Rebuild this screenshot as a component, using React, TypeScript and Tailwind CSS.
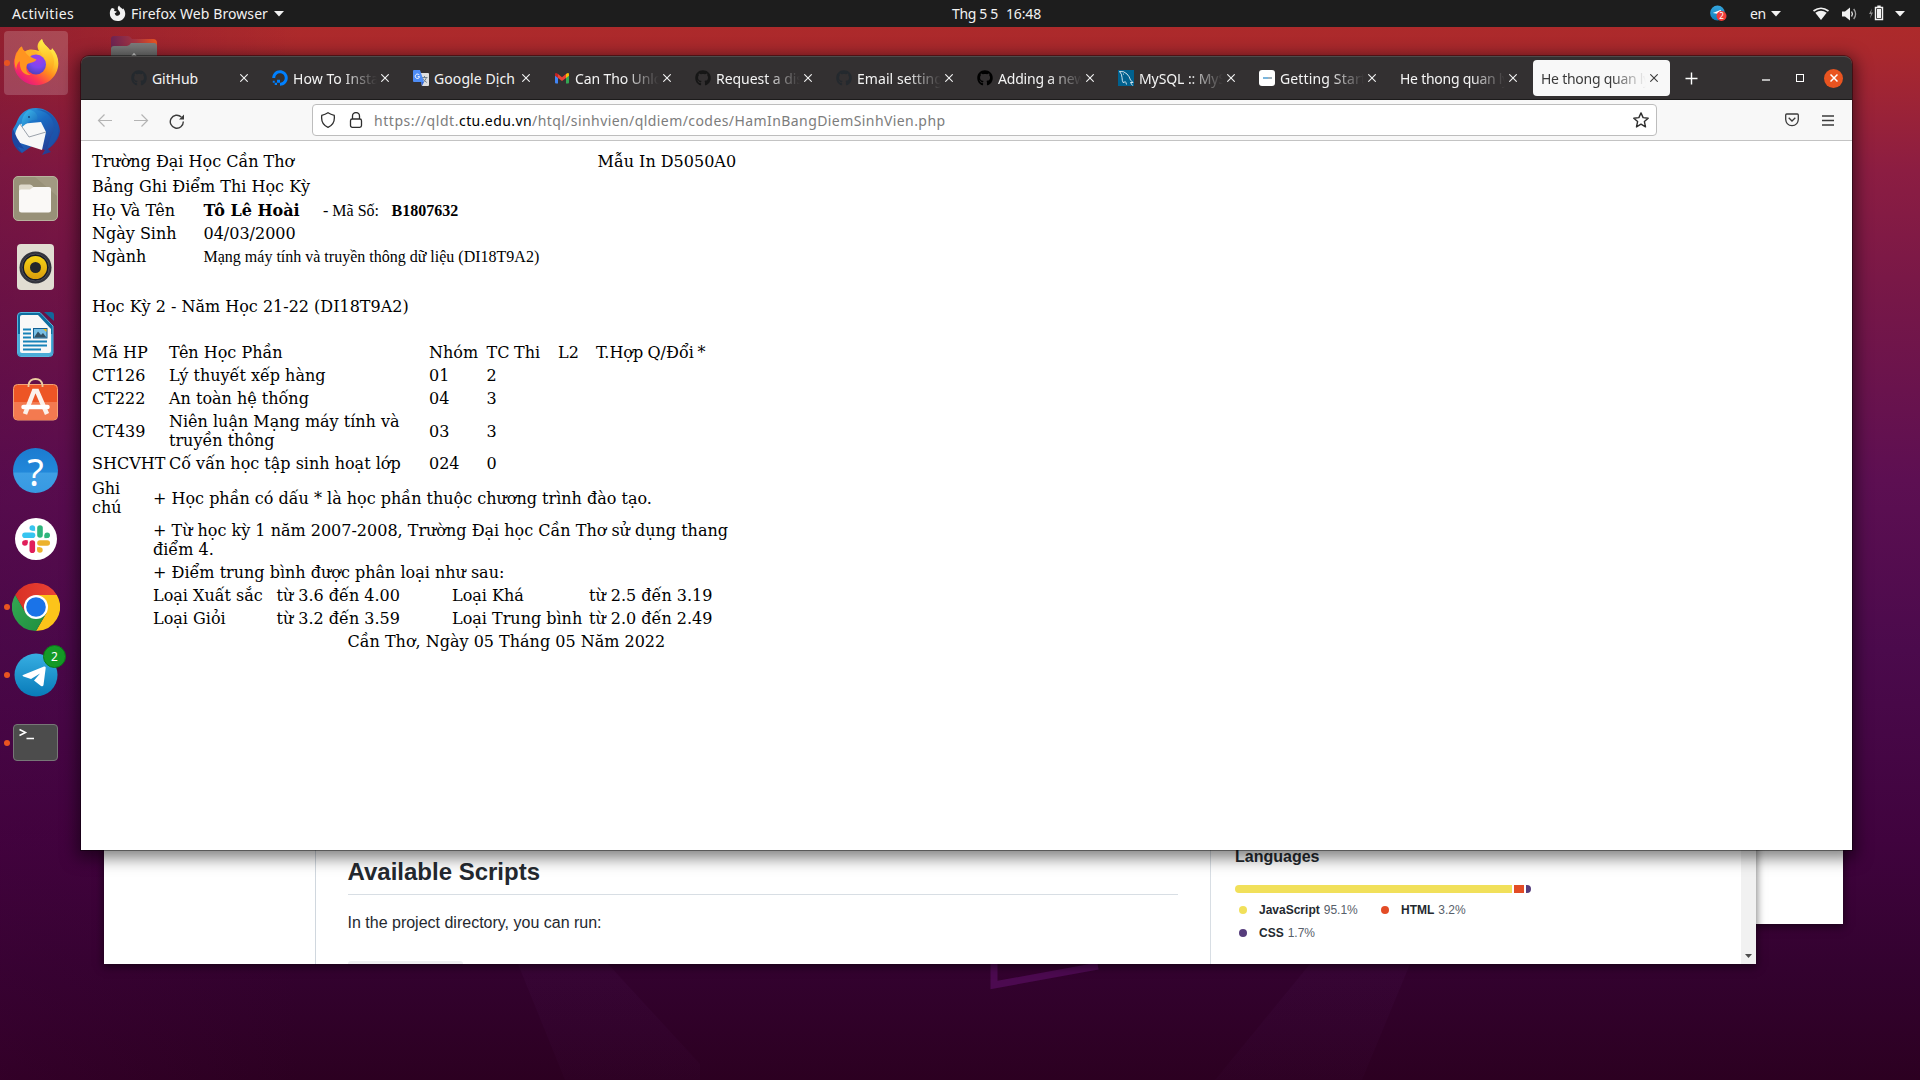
import { useLayoutEffect, useRef, useState, type ReactNode } from "react";
import { FaGithub, FaDigitalOcean } from "react-icons/fa";

/** Sets a label so that it fills exactly `w` pixels, by adjusting its tracking. */
function Fit({ w, children, className = "" }: { w: number; children: string; className?: string }) {
  const ref = useRef<HTMLSpanElement>(null);
  const [tracking, setTracking] = useState(0);
  useLayoutEffect(() => {
    const el = ref.current;
    if (!el) return;
    el.style.letterSpacing = "0px";
    const natural = el.getBoundingClientRect().width;
    const next = (w - natural) / children.length;
    el.style.letterSpacing = `${next}px`;
    setTracking(next);
  }, [w, children]);
  return (
    <span ref={ref} className={"inline-block shrink-0 whitespace-pre " + className} style={{ letterSpacing: `${tracking}px` }}>
      {children}
    </span>
  );
}

function Wallpaper() {
  return (
    <div className="absolute inset-0 bg-[linear-gradient(180deg,#b02b29_0px,#ab292c_45px,#8c1d42_170px,#761748_300px,#5d0f52_480px,#4b0a4c_650px,#40033e_840px,#33022f_970px,#2c0021_1080px)]">
      <div className="absolute inset-y-0 left-0 w-[300px] bg-[linear-gradient(90deg,rgba(70,0,60,0.25),transparent)]" />
      <svg className="absolute inset-0" width="1920" height="1080">
        <defs>
          <linearGradient id="beam" x1="0" y1="0" x2="0" y2="1"><stop stopColor="#45104a" stopOpacity=".22" /><stop offset="1" stopColor="#45104a" stopOpacity=".08" /></linearGradient>
        </defs>
        <path d="M518 964H608L700 1064V1080H565Z" fill="url(#beam)" />
        <path d="M1310 964H1410L1362 1080H1215Z" fill="url(#beam)" />
        <path d="M994 955V985L1098 966" fill="none" stroke="#4c0a50" strokeWidth="7" />
      </svg>
    </div>
  );
}

function Caret() {
  return (
    <svg width="10" height="6" viewBox="0 0 10 6">
      <path d="M0 0H10L5 5.5Z" fill="#f2f2f2" />
    </svg>
  );
}

function TopBar() {
  return (
    <header className="relative flex h-[27px] items-center bg-[#1d1d1d] pl-3 font-['Noto_Sans',sans-serif] text-[14px] leading-[27px] text-[#f2f2f2]">
      <Fit w={62}>Activities</Fit>
      <svg className="ml-[35px]" width="17" height="17" viewBox="0 0 17 17">
        <path d="M2.2 3.8C2.7 3 3.4 2.8 3.9 3.5C4.5 3.5 5.1 3.6 5.6 4C5.3 4.8 5 5.4 5.3 6L7.8 6.5C7.3 7.6 6.4 8 5.7 8.2C6 10 7.4 11 8.9 10.8C11 10.4 11.7 8.4 10.6 6.7C9.8 5.6 8.9 5 8.8 3.6C8.7 2.3 9.3 1.2 10.1 .4C10.8 2.2 12.5 2.6 13.6 4.2C14.1 4 14 3.4 13.8 3C17.4 6.6 16.8 12 13.5 14.5C9.8 17.3 4.2 16.3 1.9 12.5C.3 9.8 .6 6 2.2 3.8Z" fill="#f2f2f2" />
      </svg>
      <Fit w={137} className="ml-[5px]">Firefox Web Browser</Fit>
      <span className="ml-[6px]"><Caret /></span>
      <Fit w={46} className="ml-[668px]">Thg 5 5</Fit>
      <Fit w={35} className="ml-2">16:48</Fit>
      <svg className="ml-[669px]" width="17" height="17" viewBox="0 0 17 17">
        <defs>
          <linearGradient id="tray" x1="0" y1="0" x2="0" y2="1"><stop stopColor="#35a6de" /><stop offset="1" stopColor="#0c7dbb" /></linearGradient>
        </defs>
        <circle cx="7.5" cy="8" r="7.4" fill="url(#tray)" />
        <path d="M2.8 8L11 4.7L10 9.5L6 8.4Z" fill="#fff" />
        <circle cx="11.5" cy="11" r="5" fill="#ef3b38" />
        <text x="11.5" y="14" fontSize="8" fill="#fff" textAnchor="middle" fontFamily="Noto Sans">2</text>
      </svg>
      <Fit w={16} className="ml-[23px]">en</Fit>
      <span className="ml-[5px]"><Caret /></span>
      <svg className="ml-[32px]" width="16" height="14" viewBox="0 0 16 14">
        <path d="M.5 4Q8-1.5 15.5 4" fill="none" stroke="#f2f2f2" strokeWidth="1.7" />
        <path d="M2.3 5.8Q8 1.8 13.7 5.8L8 13Z" fill="#f2f2f2" />
      </svg>
      <svg className="ml-[12px]" width="17" height="14" viewBox="0 0 17 14">
        <path d="M1 4.5H4L9 .5V13.5L4 9.5H1Z" fill="#f2f2f2" />
        <path d="M10.6 4.5Q12.2 7 10.6 9.5" fill="none" stroke="#f2f2f2" strokeWidth="1.3" />
        <path d="M12.7 2Q16.5 7 12.7 12" fill="none" stroke="#a5a5a5" strokeWidth="1.3" />
      </svg>
      <svg className="-mt-[2px] ml-[9px]" width="18" height="16" viewBox="0 0 18 16">
        <path d="M5 3.5L2 9H4L3 13.5L6 7.5H4Z" fill="#8b8b8b" />
        <path d="M8.500 2.500H15.500V14.500H8.500Z" fill="none" stroke="#f2f2f2" strokeWidth="1.4" />
        <path d="M10 4H14V13H10ZM10.3 .5H13.7V2.4H10.3Z" fill="#f2f2f2" />
      </svg>
      <span className="ml-[10px]"><Caret /></span>
    </header>
  );
}

function FirefoxIcon() {
  return (
    <svg width="46" height="48" viewBox="0 0 46 48">
      <defs>
        <linearGradient id="ffBody" x1=".85" y1=".1" x2=".2" y2=".95">
          <stop stopColor="#fff44f" /><stop offset=".3" stopColor="#ffc42c" /><stop offset=".52" stopColor="#ff8a1e" /><stop offset=".76" stopColor="#ff3a50" /><stop offset="1" stopColor="#e01587" />
        </linearGradient>
        <linearGradient id="ffTail" x1=".5" y1="0" x2=".5" y2="1"><stop stopColor="#fff14a" /><stop offset=".6" stopColor="#ffbd28" /><stop offset="1" stopColor="#ff8b16" stopOpacity=".2" /></linearGradient>
        <radialGradient id="ffGlobe" cx=".6" cy=".25" r=".8"><stop stopColor="#a43ae8" /><stop offset=".5" stopColor="#7a48f0" /><stop offset="1" stopColor="#4a40b8" /></radialGradient>
      </defs>
      <path d="M5 12C6.500 9 8 8 9 7.500C9.200 10 10.300 11 12 12.500C17 9 22 11 26 12C23 7 25 3 29 0C30 5 34 7 37 11C39 11 38.800 10 39 9C46 16 47 26 43 34C38 44 26 49 15 44.500C4 40 -2 28 2 18C3 14 3.500 13 5 12Z" fill="url(#ffBody)" />
      <circle cx="23" cy="25.500" r="10" fill="url(#ffGlobe)" />
      <path d="M29 0C30 5 35 8 38 13C43 21 42 31 34 36C36 31 36 26 33 21C30 15 23 11 29 0Z" fill="url(#ffTail)" />
      <path d="M5 12C6.500 9 8 8 9 7.500C9.200 10 10.300 11 12.500 12.500C15 15 16 18 23.500 20.500C21 24 17 23.500 14.500 25C12 29 13 34 18 36C11 37 6 31 7 22C4 24 3 28 3.500 31C0 23 2 17 5 12Z" fill="#ff9420" />
      <path d="M12 12.500C17 10 21 12 24.500 14C20 14 17.500 16 17 18C15 16 13 15 12 12.500Z" fill="#ffb02a" />
    </svg>
  );
}

function ThunderbirdIcon() {
  return (
    <svg width="48" height="48" viewBox="0 0 48 48">
      <defs>
        <linearGradient id="tb" x1="0" y1="0" x2=".8" y2="1"><stop stopColor="#37aee6" /><stop offset=".45" stopColor="#1a6cc4" /><stop offset="1" stopColor="#28368c" /></linearGradient>
        <linearGradient id="tbHead" x1="0" y1="0" x2="1" y2="1"><stop stopColor="#40c0f0" /><stop offset="1" stopColor="#1664b8" /></linearGradient>
      </defs>
      <path d="M17 2C33-3 47 10 48 24C47 32 42 38 36 42L39 45L30 48L33 43L20 39L10 46C3 42-1 31 1 22L4 17C7 9 10 5 17 2Z" fill="url(#tb)" />
      <path d="M8 17L29 15L34 25L30 43L8 36L3 37C2 30 3 23 8 17Z" fill="#f7f7f7" />
      <path d="M8 17L17 30L34 25" fill="none" stroke="#9ba2ab" strokeWidth="1" />
      <path d="M17 3C23 3 27 9 25 13C18 12 15 17 10 20C9 13 11 7 17 3Z" fill="url(#tbHead)" />
      <path d="M24 3C35 3 43 12 42 23L38 32L35 42C44 37 50 25 44 14C39 5 30 1 24 3Z" fill="#1957ae" opacity=".7" />
      <path d="M1 22L5 31L12 42L6 40L10 46C1 41-2 30 1 22Z" fill="#1c46a0" />
      <circle cx="17" cy="10" r=".9" fill="#0c3d78" />
    </svg>
  );
}

function FilesIcon() {
  return (
    <svg width="45" height="45" viewBox="0 0 45 45">
      <rect x=".5" y=".5" width="44" height="44" rx="4.500" fill="#989178" stroke="#b8b39e" />
      <path d="M22 1H41Q44 1 44 4V20Z" fill="#b4ad96" opacity=".35" />
      <path d="M6 10Q6 8.500 8 8.500H17Q19 8.500 20.500 11H36V20H6Z" fill="#dedacb" />
      <path d="M6 15Q6 13.500 8 13.500H17L20.500 11H36Q38 11 38 13V34Q38 36.500 35.500 36.500H8.500Q6 36.500 6 34Z" fill="#faf9f7" />
    </svg>
  );
}

function RhythmboxIcon() {
  return (
    <svg width="37" height="46" viewBox="0 0 37 46">
      <defs><linearGradient id="rb" x1="0" y1="0" x2="0" y2="1"><stop stopColor="#f6d416" /><stop offset="1" stopColor="#d99d0c" /></linearGradient></defs>
      <rect width="37" height="46" rx="4" fill="#e1ddd2" />
      <circle cx="18.500" cy="23.500" r="16" fill="#33343c" />
      <circle cx="18.500" cy="23.500" r="13.500" fill="#171b25" stroke="#5b5c64" strokeWidth=".7" />
      <circle cx="18.500" cy="23.500" r="11.500" fill="url(#rb)" />
      <circle cx="18.500" cy="23.500" r="5.500" fill="#25272b" />
    </svg>
  );
}

function WriterIcon() {
  return (
    <svg width="37" height="45" viewBox="0 0 37 45">
      <path d="M4 .5H23L36 14V41Q36 44.500 32.500 44.500H4Q.5 44.500 .5 41V4Q.5 .5 4 .5Z" fill="#0e6e9f" stroke="#58b5df" />
      <path d="M1 22H35.500V41Q35.500 44 32.500 44H4Q1 44 1 41Z" fill="#4bacd8" />
      <path d="M5 3H21L34 17V39Q34 41 32 41H5Q3 41 3 39V5Q3 3 5 3Z" fill="#f8f8f8" />
      <path d="M27 0H34Q37 0 37 3V9Z" fill="#12679a" />
      <path d="M6 17.500H14M6 21.500H14M6 25.500H14M6 29.500H30M6 33.500H30M6 37.500H24" stroke="#1782b8" strokeWidth="2" />
      <rect x="16.500" y="16.500" width="13.500" height="9.500" fill="#78bfe5" stroke="#125e91" />
      <path d="M17 25.500L21 19.500L24 23L26 21L29.500 25.500Z" fill="#345163" /><path d="M26 17H29.500V20Z" fill="#f2b90b" />
    </svg>
  );
}

function SoftwareIcon() {
  return (
    <svg width="45" height="43" viewBox="0 0 45 43">
      <rect x=".5" y="6.500" width="44" height="35.500" rx="4" fill="#ed5525" stroke="#f1a275" />
      <path d="M1 24H44V38Q44 41.500 41 41.500H4Q1 41.500 1 38Z" fill="#f37a50" />
      <path d="M15.500 9V7Q16.500 1 22.500 1T29.500 7V9" fill="none" stroke="#eccda0" strokeWidth="1.800" />
      <path d="M12 36L21 13H24L34 36" fill="none" stroke="#fbf1eb" strokeWidth="4.500" />
      <path d="M10.500 29H34.500" stroke="#fff" strokeWidth="4.500" strokeLinecap="round" />
    </svg>
  );
}

function HelpIcon() {
  return (
    <div className="flex size-[45px] items-center justify-center rounded-full bg-[linear-gradient(180deg,#1c7bd0_0%,#2288da_54%,#3e9fe5_55%,#3799e2_100%)] font-['Noto_Sans',sans-serif] text-[38px] leading-none text-white">
      ?
    </div>
  );
}

function SlackIcon() {
  return (
    <svg width="42" height="42" viewBox="0 0 42 42">
      <circle cx="21" cy="21" r="21" fill="#fff" />
      <g strokeWidth="5.600" strokeLinecap="round">
        <path d="M10 17.300H17.500" stroke="#36c5f0" /><path d="M17.300 10H17.300" stroke="#36c5f0" />
        <path d="M25 10V17" stroke="#2eb67d" /><path d="M32.200 17.300H32.200" stroke="#2eb67d" />
        <path d="M25 25H32.200" stroke="#ecb22e" /><path d="M24.900 32H24.900" stroke="#ecb22e" />
        <path d="M17.300 25V32.200" stroke="#e01e5a" /><path d="M9.900 25H9.900" stroke="#e01e5a" />
      </g>
      <path d="M17.300 10H20.100V12.800H17.300Z" fill="#36c5f0" /><path d="M29.400 17.300H32.200V20.100H29.400Z" fill="#2eb67d" />
      <path d="M22.100 29.200H24.900V32H22.100Z" fill="#ecb22e" /><path d="M9.900 22.200H12.700V25H9.900Z" fill="#e01e5a" />
    </svg>
  );
}

function ChromeIcon() {
  return (
    <svg width="48" height="48" viewBox="0 0 48 48">
      <defs>
        <linearGradient id="cr" x1="0" x2="1"><stop stopColor="#d93025" /><stop offset="1" stopColor="#ea4335" /></linearGradient>
        <linearGradient id="cg" x1="1" y1="1" x2="0" y2="0"><stop stopColor="#1e8e3e" /><stop offset="1" stopColor="#34a853" /></linearGradient>
      </defs>
      <path d="M3.200 12A24 24 0 0 1 44.800 12H24L13.600 30Z" fill="url(#cr)" />
      <path d="M44.800 12A24 24 0 0 1 24 48L34.400 30L24 12Z" fill="#fcc41a" />
      <path d="M24 48A24 24 0 0 1 3.200 12L13.600 30L34.400 30Z" fill="url(#cg)" />
      <circle cx="24" cy="24" r="12" fill="#fff" /><circle cx="24" cy="24" r="9.800" fill="#1a73e8" />
    </svg>
  );
}

function TelegramIcon() {
  return (
    <span className="relative">
      <svg width="44" height="44" viewBox="0 0 44 44">
        <defs><linearGradient id="tg" x1="0" y1="0" x2="0" y2="1"><stop stopColor="#37aee2" /><stop offset="1" stopColor="#087bb9" /></linearGradient></defs>
        <circle cx="22" cy="22" r="21.500" fill="url(#tg)" />
        <path d="M9 22L30 13.500Q32 13 31.700 15L29.500 32Q29 34 27 33L20 27.500L26 20.500L17 26L9.500 23.500Q7.500 22.700 9 22Z" fill="#fff" />
      </svg>
      <span className="absolute -top-[8px] left-[29px] flex size-[23px] items-center justify-center rounded-full border border-[#0b7a18] bg-[#149a26] font-['Noto_Sans',sans-serif] text-[12px] leading-none text-white">2</span>
    </span>
  );
}

function TerminalIcon() {
  return (
    <div className="h-[37px] w-[45px] rounded-[4px] border border-[#777] bg-[#4c4c4c]">
      <svg width="43" height="34" viewBox="0 0 43 34">
        <path d="M5.500 4.500L11.500 7.500L5.500 10.500M12.500 13.500H20" fill="none" stroke="#fff" strokeWidth="1.500" />
      </svg>
    </div>
  );
}

function DockItem({ children, running, active }: { children: ReactNode; running?: boolean; active?: boolean }) {
  return (
    <div className="relative flex h-[68px] w-[72px] items-center justify-center">
      {active && <span className="absolute inset-x-1 inset-y-[2px] rounded-[4px] bg-white/18" />}
      {running && <span className="absolute top-[31px] left-1 size-[6px] rounded-full bg-[#e95420]" />}
      <span className="relative flex">{children}</span>
    </div>
  );
}

function Dock() {
  return (
    <nav className="flex h-[1053px] w-[72px] flex-col bg-[linear-gradient(180deg,#482125_0px,#401d2a_100px,#341a2d_300px,#2d182b_520px,#271626_800px,#211720_1053px)] pt-[2px]">
      <DockItem running active><FirefoxIcon /></DockItem>
      <DockItem><ThunderbirdIcon /></DockItem>
      <DockItem><span className="mr-px mb-px"><FilesIcon /></span></DockItem>
      <DockItem><span className="mr-px"><RhythmboxIcon /></span></DockItem>
      <DockItem><span className="mr-px mb-px"><WriterIcon /></span></DockItem>
      <DockItem><span className="mr-px mb-[7px]"><SoftwareIcon /></span></DockItem>
      <DockItem><span className="mr-px mb-px"><HelpIcon /></span></DockItem>
      <DockItem><SlackIcon /></DockItem>
      <DockItem running><ChromeIcon /></DockItem>
      <DockItem running><TelegramIcon /></DockItem>
      <DockItem running><span className="mr-px mb-px"><TerminalIcon /></span></DockItem>
      <div className="mt-auto mb-[19px] ml-[21px] grid w-[30px] grid-cols-3 gap-[6px]">
        {Array.from({ length: 9 }, (_, i) => <span key={i} className="size-[6px] rounded-[2px] bg-[#f2f2f2]" />)}
      </div>
    </nav>
  );
}

const Github = ({ className }: { className: string }) => <FaGithub className={"size-4 " + className} />;

function TranslateIcon() {
  return (
    <svg width="16" height="16" viewBox="0 0 16 16">
      <path d="M6 3H15Q16 3 16 4V15Q16 16 15 16H9Z" fill="#dedede" />
      <path d="M8.500 7.500H14.500M11.500 6V7.500M13.500 7.500Q12.500 11 9.500 12.500M10 8.500Q11 11 13.800 12.500" fill="none" stroke="#687885" strokeWidth=".9" />
      <path d="M1 0H7L11 12H1Q0 12 0 11V1Q0 0 1 0Z" fill="#4e8cf5" /><path d="M8 12H11L9 16Z" fill="#3367d6" />
      <path d="M6.300 5.100A2.200 2.200 0 1 0 6.600 6.700H4.700" fill="none" stroke="#fff" strokeWidth="1" />
    </svg>
  );
}
function GmailIcon() {
  return (
    <svg width="16" height="16" viewBox="0 0 16 16">
      <path d="M1 4V12.500Q1 13.500 2 13.500H4V6.500Z" fill="#4285f4" /><path d="M15 4V12.500Q15 13.500 14 13.500H12V6.500Z" fill="#34a853" />
      <path d="M4 4L8 7.200L12 4V8L8 11L4 8Z" fill="#ea4335" /><path d="M1 4.500Q1 2 4 4V8L1 5.800Z" fill="#c5221f" /><path d="M15 4.500Q15 2 12 4V8L15 5.800Z" fill="#fbbc04" />
    </svg>
  );
}
function MySqlIcon() {
  return (
    <svg width="16" height="16" viewBox="0 0 16 16">
      <rect width="16" height="16" fill="#00618f" />
      <path d="M1.500 1.500Q6 .8 9 4Q11.500 6.500 12.500 10L15 12.500L12.500 12.500L14.500 15.500M1.500 1.500Q4 4 4 7.500Q4 11 5.500 13L7 11.500Q8 12 8.500 14.500" fill="none" stroke="#e9f2f6" strokeWidth=".9" /><circle cx="5.500" cy="4" r=".5" fill="#fff" />
    </svg>
  );
}
function DocsIcon() {
  return (
    <span className="flex size-4 items-center justify-center rounded-[3px] bg-white">
      <span className="flex h-[2px] w-[9px] opacity-80"><span className="flex-1 bg-[#5aa5d5]" /><span className="w-1 bg-[#8aa0ac]" /></span>
    </span>
  );
}

const tabs: { icon?: ReactNode; title: string; w: number; fade?: boolean; active?: boolean }[] = [
  { icon: <Github className="text-[#24292e]" />, title: "GitHub", w: 46 },
  { icon: <FaDigitalOcean className="size-4 text-[#0080ff]" />, title: "How To Insta", w: 86, fade: true },
  { icon: <TranslateIcon />, title: "Google Dịch", w: 81 },
  { icon: <GmailIcon />, title: "Can Tho Unlo", w: 87, fade: true },
  { icon: <Github className="text-[#161616]" />, title: "Request a dis", w: 87, fade: true },
  { icon: <Github className="text-[#24292e]" />, title: "Email setting", w: 86, fade: true },
  { icon: <Github className="text-black" />, title: "Adding a new", w: 87, fade: true },
  { icon: <MySqlIcon />, title: "MySQL :: MyS", w: 87, fade: true },
  { icon: <DocsIcon />, title: "Getting Start", w: 86, fade: true },
  { title: "He thong quan ly", w: 109, fade: true },
  { title: "He thong quan ly", w: 109, fade: true, active: true },
];

function Tab({ icon, title, w, fade, active }: (typeof tabs)[number]) {
  return (
    <div className={"flex h-9 w-[137px] shrink-0 items-center rounded-[4px] pr-[12px] pl-2 " + (active ? "bg-[#f8f8f8] text-[#3b3b3b]" : "text-[#f4f4f4]")}>
      {icon && <span className="mr-[5px] flex shrink-0">{icon}</span>}
      <span className={"flex min-w-0 flex-1 overflow-hidden pt-[2px] " + (fade ? "[mask-image:linear-gradient(to_left,transparent_4px,#000_38px)]" : "")}>
        <Fit w={w}>{title}</Fit>
      </span>
      <svg className="shrink-0" width="8" height="8" viewBox="0 0 8 8">
        <path d="M.3 .3L7.700 7.700M7.700 .3L.3 7.700" stroke="currentColor" strokeWidth="1.100" />
      </svg>
    </div>
  );
}

function TitleBar() {
  return (
    <div className="flex h-[44px] items-start rounded-t-[8px] border-t border-b border-t-[#4d4b4b] border-b-[#1c1b1b] bg-[#333031] pt-[3px] pl-[42px] font-['Noto_Sans',sans-serif] text-[14px] leading-[36px]">
      <div className="flex gap-1">{tabs.map((t, i) => <Tab key={i} {...t} />)}</div>
      <div className="flex h-9 items-center text-white">
        <svg className="mt-px ml-[15px]" width="13" height="13" viewBox="0 0 13 13"><path d="M6.500 .5V12.500M.5 6.500H12.500" stroke="currentColor" strokeWidth="1.400" /></svg>
        <svg className="ml-[64px]" width="8" height="6" viewBox="0 0 8 6"><path d="M0 5H8" stroke="currentColor" strokeWidth="1.300" /></svg>
        <span className="ml-[26px] size-[8px] border border-white" />
        <span className="ml-5 flex size-[19px] items-center justify-center rounded-full bg-[#e95420]">
          <svg width="8" height="8" viewBox="0 0 8 8"><path d="M.5 .5L7.500 7.500M7.500 .5L.5 7.500" stroke="#fff" strokeWidth="1.500" /></svg>
        </span>
      </div>
    </div>
  );
}

function ToolBar() {
  return (
    <div className="flex h-[41px] items-center border-b border-[#c3c3c3] bg-[#f8f8f8] pl-[16px] text-[#3b3b3b]">
      <svg width="16" height="16" viewBox="0 0 16 16" fill="none" stroke="#b4b4b4" strokeWidth="1.200"><path d="M15 8.500H1.500M7.500 2.500L1.500 8.500L7.500 14.500" /></svg>
      <svg className="ml-5" width="16" height="16" viewBox="0 0 16 16" fill="none" stroke="#b4b4b4" strokeWidth="1.200"><path d="M1 8.500H14.500M8.500 2.500L14.500 8.500L8.500 14.500" /></svg>
      <svg className="mt-px ml-5" width="16" height="16" viewBox="0 0 16 16" fill="none" stroke="#3b3b3b" strokeWidth="1.400"><path d="M14.300 8.500A6.500 6.500 0 1 1 12.300 4" /><path d="M15 1.500V6.500H10Z" fill="#3b3b3b" stroke="none" /></svg>
      <div className="ml-[127px] flex h-8 w-[1345px] items-center rounded-[4px] border border-[#bdbdbd] bg-white pl-[7px] font-['Noto_Sans',sans-serif] text-[14px] leading-[28px] text-[#7c7c7c]">
        <svg width="16" height="16" viewBox="0 0 16 16" fill="none" stroke="#2e2e2e" strokeWidth="1.300"><path d="M8 .7C10 2 12 2.800 14.200 3.300C15 9 12.500 13.500 8 15.300C3.500 13.500 1 9 1.800 3.300C4 2.800 6 2 8 .7Z" /></svg>
        <svg className="ml-3" width="16" height="16" viewBox="0 0 16 16" fill="none" stroke="#2e2e2e" strokeWidth="1.300"><rect x="2.500" y="7" width="11" height="8.300" rx="1.800" /><path d="M4.500 7V4A3.500 3.500 0 0 1 11.500 4V7" /></svg>
        <span className="ml-[10px] flex pt-[2px]">
          <Fit w={85}>https://qldt.</Fit>
          <Fit w={73} className="text-black">ctu.edu.vn</Fit>
          <Fit w={413.5}>/htql/sinhvien/qldiem/codes/HamInBangDiemSinhVien.php</Fit>
        </span>
        <svg className="mr-[7px] ml-auto" width="16" height="16" viewBox="0 0 16 16" fill="none" stroke="#2e2e2e" strokeWidth="1.400" strokeLinejoin="round"><path d="M8 .9L10.100 5.600L15.200 6.200L11.400 9.600L12.500 14.900L8 12.200L3.500 14.900L4.600 9.600L.8 6.200L5.900 5.600Z" /></svg>
      </div>
      <svg className="ml-[127px]" width="16" height="16" viewBox="0 0 16 16" fill="none" stroke="#3b3b3b" strokeWidth="1.300"><path d="M2.700 2H13.300Q14.300 2 14.300 3V7.500Q13.800 13.500 8 13.700Q2.200 13.500 1.700 7.500V3Q1.700 2 2.700 2ZM4.700 5.800L8 9L11.300 5.800" /></svg>
      <svg className="ml-[22px]" width="12" height="11" viewBox="0 0 12 11" stroke="#3b3b3b" strokeWidth="1.300"><path d="M0 1H12M0 5.500H12M0 10H12" /></svg>
    </div>
  );
}

const courses = [
  ["CT126", "Lý thuyết xếp hàng", "01", "2"],
  ["CT222", "An toàn hệ thống", "04", "3"],
  ["CT439", "Niên luận Mạng máy tính và truyền thông", "03", "3"],
  ["SHCVHT", "Cố vấn học tập sinh hoạt lớp", "024", "0"],
];

function Transcript() {
  return (
    <main className="h-[709px] bg-white pt-[9px] pl-[11px] font-['DejaVu_Serif',serif] text-[16px] leading-[19px] whitespace-nowrap text-black">
      <div className="grid h-[25px] grid-cols-[505.5px_1fr] py-[2px]"><span>Trường Đại Học Cần Thơ</span><span>Mẫu In D5050A0</span></div>
      <div className="h-6 py-[2px]">Bảng Ghi Điểm Thi Học Kỳ</div>
      <div className="grid h-[23px] grid-cols-[111.5px_119.5px_68.5px_1fr] items-baseline pt-[2px]">
        <span>Họ Và Tên</span><b>Tô Lê Hoài</b>
        <span className="font-['Liberation_Serif',serif]">- Mã Số:</span>
        <b className="font-['Liberation_Serif',serif]">B1807632</b>
      </div>
      <div className="grid h-[23px] grid-cols-[111.5px_1fr] pt-[2px]"><span>Ngày Sinh</span><span>04/03/2000</span></div>
      <div className="grid h-[23px] grid-cols-[111.5px_1fr] items-baseline pt-[2px]"><span>Ngành</span><span className="font-['Liberation_Serif',serif]">Mạng máy tính và truyền thông dữ liệu (DI18T9A2)</span></div>
      <div className="mt-[27px] h-[23px] pt-[2px]">Học Kỳ 2 - Năm Học 21-22 (DI18T9A2)</div>
      <div className="mt-[23px] grid h-[23px] grid-cols-[77px_260px_57.5px_27.5px_44px_38px_51.5px_50px_1fr] items-center">
        <span>Mã HP</span><span>Tên Học Phần</span><span>Nhóm</span><span>TC</span><span>Thi</span><span>L2</span><span>T.Hợp</span><span>Q/Đổi</span><span>*</span>
      </div>
      {courses.map(([code, name, group, credits]) => (
        <div key={code} className="grid grid-cols-[77px_260px_57.5px_1fr] items-center py-[2px]">
          <span>{code}</span><span className="w-[250px] whitespace-normal">{name}</span><span>{group}</span><span>{credits}</span>
        </div>
      ))}
      <div className="mt-[2px] grid grid-cols-[61px_1fr] items-center py-[2px]">
        <span className="w-[40px] whitespace-normal">Ghi chú</span><span>+ Học phần có dấu * là học phần thuộc chương trình đào tạo.</span>
      </div>
      <div className="ml-[61px] w-[600px] py-[2px] whitespace-normal">+ Từ học kỳ 1 năm 2007-2008, Trường Đại học Cần Thơ sử dụng thang<br />điểm 4.</div>
      <div className="ml-[61px] h-[23px] pt-[2px]">+ Điểm trung bình được phân loại như sau:</div>
      <div className="ml-[61px] grid grid-cols-[123.5px_175.5px_137px_1fr] leading-[23px]">
        <span>Loại Xuất sắc</span><span>từ 3.6 đến 4.00</span><span>Loại Khá</span><span>từ 2.5 đến 3.19</span>
        <span>Loại Giỏi</span><span>từ 3.2 đến 3.59</span><span>Loại Trung bình</span><span>từ 2.0 đến 2.49</span>
      </div>
      <div className="ml-[255.5px] leading-[23px]">Cần Thơ, Ngày 05 Tháng 05 Năm 2022</div>
    </main>
  );
}

function Language({ color, name, share }: { color: string; name: string; share: string }) {
  return (
    <span className="flex items-center">
      <span className={"mr-[12px] size-2 rounded-full " + color} />
      <b className="mt-px mr-1 text-[#24292f]">{name}</b>
      <span className="mt-px text-[#57606a]">{share}</span>
    </span>
  );
}

function RepositoryWindow() {
  return (
    <section className="absolute top-[70px] left-[104px] flex h-[894px] w-[1652px] items-end bg-white font-['Liberation_Sans',sans-serif] text-[#24292f] shadow-[0_2px_8px_1px_rgba(0,0,0,0.5)]">
      <div className="h-[200px] w-[212px] border-r border-[#d0d7de]" />
      <div className="flex h-[114px] w-[894px] flex-col overflow-hidden pr-[32px] pl-[31.5px]">
        <h2 className="h-[45px] border-b border-[#d8dee4] pt-[7px] text-[24px] leading-[30px] font-bold">Available Scripts</h2>
        <p className="mt-[16px] text-[16px] leading-6">In the project directory, you can run:</p>
        <span className="mt-auto h-[3px] w-[115px] rounded-t-[6px] bg-[#eeeff1]" />
      </div>
      <div className="h-[114px] w-[531px] border-l border-[#d8dee4] pl-[24px]">
        <h3 className="text-[16px] leading-[14px] font-bold">Languages</h3>
        <div className="mt-[21px] flex h-2 w-[296px] gap-[2px] overflow-hidden rounded-[6px]">
          <span className="w-[277px] bg-[#f1e05a]" /><span className="w-[10px] bg-[#e34c26]" /><span className="w-[5px] bg-[#563d7c]" />
        </div>
        <div className="mt-[5px] ml-1 grid grid-cols-[142px_1fr] text-[12px] leading-[22px]">
          <Language color="bg-[#f1e05a]" name="JavaScript" share="95.1%" />
          <Language color="bg-[#e34c26]" name="HTML" share="3.2%" />
          <Language color="bg-[#563d7c]" name="CSS" share="1.7%" />
        </div>
      </div>
      <div className="flex h-[200px] w-[15px] items-end justify-center bg-[#f1f1f1] pb-[6px]"><svg width="7" height="4"><path d="M0 0H7L3.500 4Z" fill="#4d4d4d" /></svg></div>
    </section>
  );
}

function HomeFolder() {
  return (
    <svg className="absolute top-[35px] left-[110px]" width="48" height="40" viewBox="0 0 48 40">
      <defs>
        <linearGradient id="fold" x1="0" x2="1"><stop stopColor="#6d2453" /><stop offset=".55" stopColor="#a83540" /><stop offset="1" stopColor="#e95420" /></linearGradient>
        <linearGradient id="foldFront" x1="0" y1="0" x2="0" y2="1"><stop stopColor="#7c7c7c" /><stop offset="1" stopColor="#515151" /></linearGradient>
      </defs>
      <path d="M1 4Q1 1 4 1H18Q20 1 22 4H43Q47 4 47 8V30H1Z" fill="url(#fold)" />
      <path d="M1 14Q1 11 4 11H17Q19 11 21 8H44Q47 8 47 12V40H1Z" fill="url(#foldFront)" />
      <path d="M18 26L24 19L30 26" fill="none" stroke="#d0d0d0" strokeWidth="1.500" />
    </svg>
  );
}

export default function App() {
  return (
    <div className="relative h-[1080px] w-[1920px] overflow-hidden">
      <Wallpaper />
      <TopBar />
      <Dock />
      <HomeFolder />
      <div className="absolute top-[400px] right-[77px] h-[524px] w-[600px] bg-white shadow-[0_2px_8px_1px_rgba(0,0,0,0.5)]" />
      <RepositoryWindow />
      <section className="absolute top-[56px] left-[81px] w-[1771px] rounded-t-[8px] shadow-[0_0_0_1px_rgba(0,0,0,0.4),0_4px_16px_4px_rgba(0,0,0,0.5)]">
        <TitleBar />
        <ToolBar />
        <Transcript />
      </section>
    </div>
  );
}
